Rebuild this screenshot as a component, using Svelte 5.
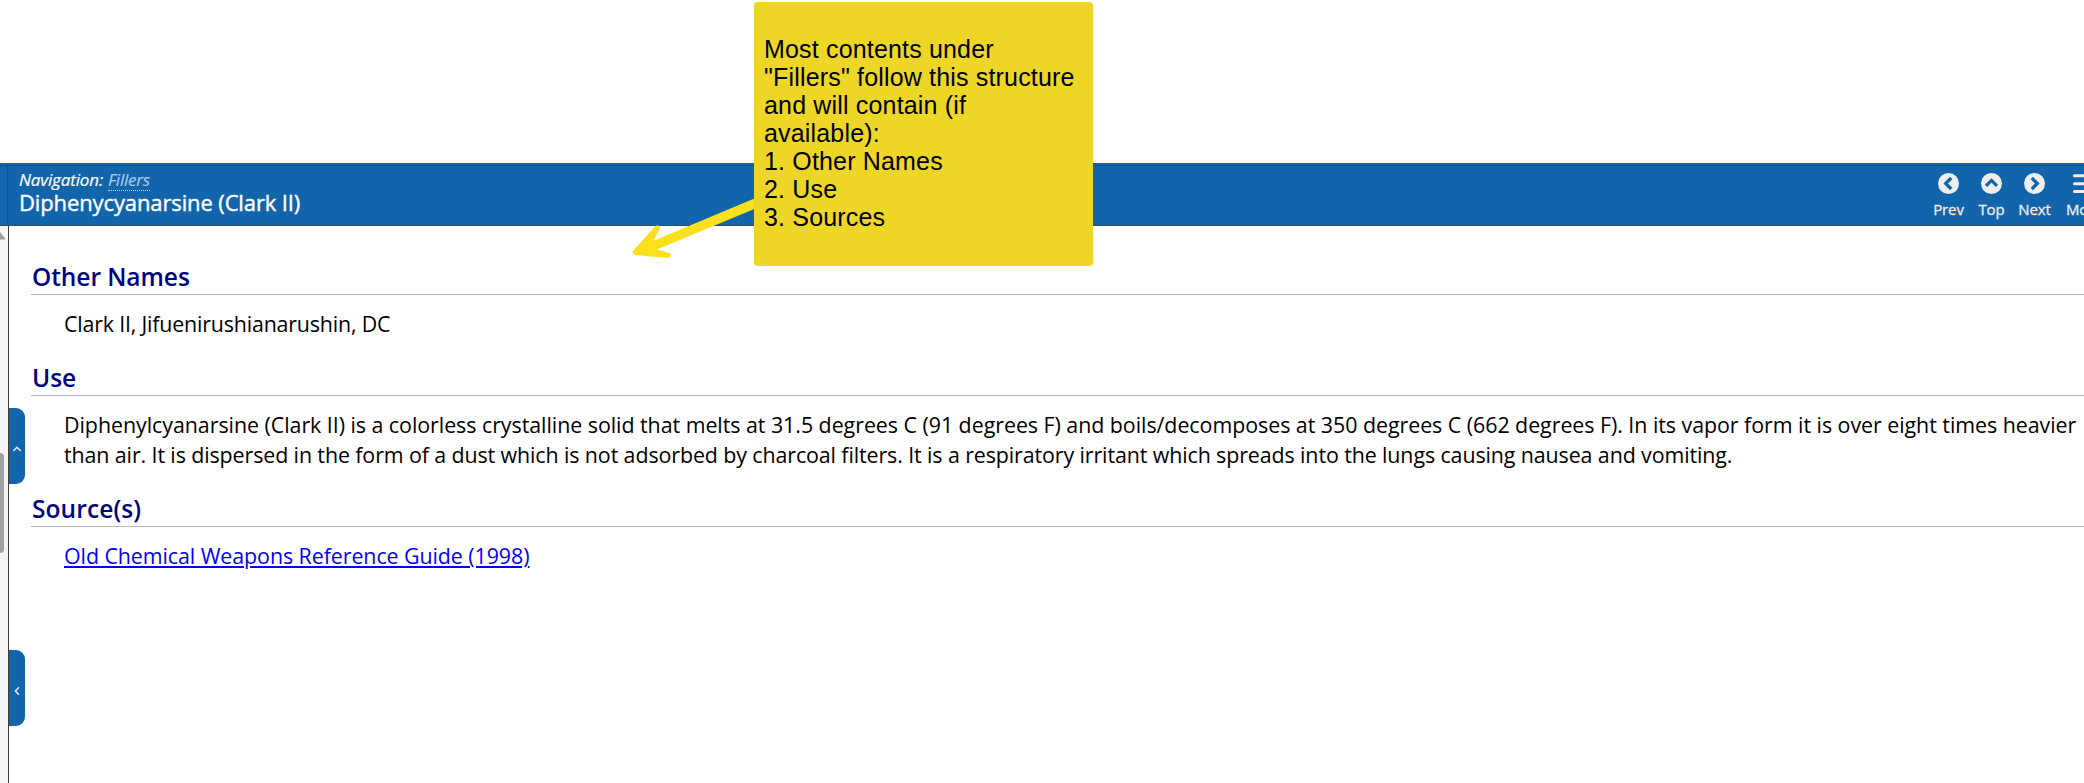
<script>
  const buttons = [
    { label: 'Prev', d: 'M13.2 5 7.7 10.5l5.5 5.5' },
    { label: 'Top', d: 'M5 12.9l5.5-5.5 5.5 5.5' },
    { label: 'Next', d: 'M7.8 5l5.5 5.5-5.5 5.5' }
  ];
</script>

<div class="page">
  <header>
    <div class="edge"></div>
    <div class="titles">
      <p class="crumbs"><span>Navigation:</span> <a href="#fillers">Fillers</a></p>
      <h1>Diphenycyanarsine (Clark II)</h1>
    </div>
    <nav>
      {#each buttons as b}
        <div class="btn">
          <svg width="21" height="21" viewBox="0 0 21 21">
            <circle cx="10.5" cy="10.5" r="10.5" fill="#eee" />
            <path d={b.d} fill="none" stroke="#1264ab" stroke-width="3.2" />
          </svg>
          <span>{b.label}</span>
        </div>
      {/each}
      <div class="btn more">
        <svg width="24" height="21" viewBox="0 0 24 21">
          <path d="M1.5 2.8h21M1.5 10.8h21M1.5 18.5h21" stroke="#eee" stroke-width="3" stroke-linecap="round" />
        </svg>
        <span>More</span>
      </div>
    </nav>
  </header>

  <div class="body">
    <aside>
      <svg class="up" width="6" height="8" viewBox="0 0 6 8"><path d="M0 0 5 6.2V7.5H0z" fill="#a0a0a0" /></svg>
      <div class="thumb"></div>
    </aside>
    <main>
      <section>
        <h2>Other Names</h2>
        <p><span class="names">Clark II, Jifuenirushianarushin, DC</span></p>
      </section>
      <section>
        <h2>Use</h2>
        <p>
          <span class="l1">Diphenylcyanarsine (Clark II) is a colorless crystalline solid that melts at 31.5 degrees C (91 degrees F) and boils/decomposes at 350 degrees C (662 degrees F). In its vapor form it is over eight times heavier</span><br />
          <span class="l2">than air. It is dispersed in the form of a dust which is not adsorbed by charcoal filters. It is a respiratory irritant which spreads into the lungs causing nausea and vomiting.</span>
        </p>
      </section>
      <section>
        <h2 class="src">Source(s)</h2>
        <p><a class="ref" href="#guide">Old Chemical Weapons Reference Guide (1998)</a></p>
      </section>
    </main>
    <div class="tab first"><svg width="10" height="8" viewBox="0 0 10 8"><path d="M1.3 6 5 2.3 8.7 6" /></svg></div>
    <div class="tab second"><svg width="8" height="10" viewBox="0 0 8 10"><path d="M6 1.3 2.3 5 6 8.7" /></svg></div>
  </div>

  <svg class="arrow" width="130" height="70" viewBox="628 194 130 70">
    <path d="M758 197 653.5 240.7 659.5 229.3Q660.5 226 657.8 225.3 655.7 225 654.5 227L633.2 250.8Q631.5 254.5 635.5 255L668 258Q670.8 257.5 671 255.3 671 253 668 252.4L656.7 249.5 758 207.6z" fill="#fbe01c" />
  </svg>
  <div class="note">
    Most contents under<br />"Fillers" follow this structure<br />and will contain (if<br />available):<br />1. Other Names<br />2. Use<br />3. Sources
  </div>
</div>

<style>
  :global(body) { background: #fff; overflow: hidden; }
  .page {
    position: relative;
    display: flex;
    flex-direction: column;
    box-sizing: border-box;
    height: 783px;
    padding-top: 163px;
    overflow: hidden;
    font-family: "Open Sans", "Noto Sans", sans-serif;
    color: #000;
  }
  h1, h2, p { margin: 0; font-weight: 400; }
  header {
    display: flex;
    flex: none;
    box-sizing: border-box;
    height: 63px;
    padding-top: 2px;
    background: linear-gradient(#1264ab 2px, #3c4654 2px, #3c4654 3px, #1264ab 3px);
    border-bottom: 1px solid #3f4550;
    color: #fff;
  }
  .edge { width: 7px; border-right: 1px solid #3c4654; }
  .titles { flex: 1; padding: 3px 0 0 11px; }
  .crumbs { font-size: 17px; font-style: italic; line-height: 24px; height: 21px; letter-spacing: -0.15px; white-space: nowrap; -webkit-text-stroke: 0.2px; }
  .crumbs a {
    display: inline-block;
    height: 22px;
    line-height: 24px;
    margin-left: 0.6px;
    color: #a8c9e8;
    text-decoration: none;
    border-bottom: 1px dotted #c5daee;
    letter-spacing: -0.2px;
    vertical-align: top;
  }
  h1 { font-size: 22px; line-height: 27px; letter-spacing: -0.12px; white-space: nowrap; -webkit-text-stroke: 0.4px; }
  nav { display: flex; width: 157px; flex: none; padding-top: 8px; color: #eee; }
  .btn { display: flex; flex: none; width: 43px; flex-direction: column; align-items: center; font-size: 15px; -webkit-text-stroke: 0.3px; }
  .btn svg { display: block; flex: none; }
  .btn span { line-height: 20px; margin-top: 5px; letter-spacing: -0.15px; }
  .more { width: 62px; align-items: flex-start; padding-left: 17px; box-sizing: border-box; }
  .more span { margin-left: -7px; }
  .body { position: relative; display: flex; flex: 1; min-height: 0; }
  aside { width: 8px; flex: none; background: #f4f4f4; border-right: 1px solid #3c3c3c; }
  .up { display: block; margin-top: 6px; }
  .thumb { width: 4px; height: 100px; margin-top: 213px; background: #a0a0a0; border-radius: 0 4px 4px 0; }
  main { flex: 1; min-width: 0; padding: 32px 0 0 22px; }
  h2 {
    height: 36px;
    padding-left: 1px;
    line-height: 38px;
    font-size: 24.5px;
    font-weight: 600;
    letter-spacing: -0.06px;
    color: #000080;
    border-bottom: 1px solid #b8b8b8;
  }
  .src { letter-spacing: 0.1px; }
  section p { padding: 14px 0 19px 33px; font-size: 21.4px; line-height: 30px; white-space: nowrap; }
  section { margin-bottom: 1px; }
  .names { letter-spacing: -0.18px; }
  .l1 { letter-spacing: -0.04px; }
  .l2 { letter-spacing: -0.1px; }
  .ref { color: #00f; letter-spacing: -0.07px; text-decoration-thickness: 2px; text-underline-offset: 2px; }
  .tab {
    position: absolute;
    left: 9px;
    display: flex;
    align-items: center;
    justify-content: center;
    width: 16px;
    height: 76px;
    background: #1264ab;
    border-radius: 0 9px 9px 0;
  }
  .tab path { fill: none; stroke: #e8eef5; stroke-width: 1.5; }
  .first { top: 182px; }
  .second { top: 424px; }
  .tab svg { margin-top: 5px; }
  .arrow { position: absolute; left: 628px; top: 194px; }
  .note {
    position: absolute;
    left: 754px;
    top: 2px;
    box-sizing: border-box;
    width: 339px;
    height: 264px;
    padding: 33px 0 0 10px;
    background: #eed626;
    border-radius: 4px;
    font: 25px/28px "Liberation Sans", Arial, sans-serif;
    letter-spacing: 0.17px;
    white-space: nowrap;
  }
</style>
